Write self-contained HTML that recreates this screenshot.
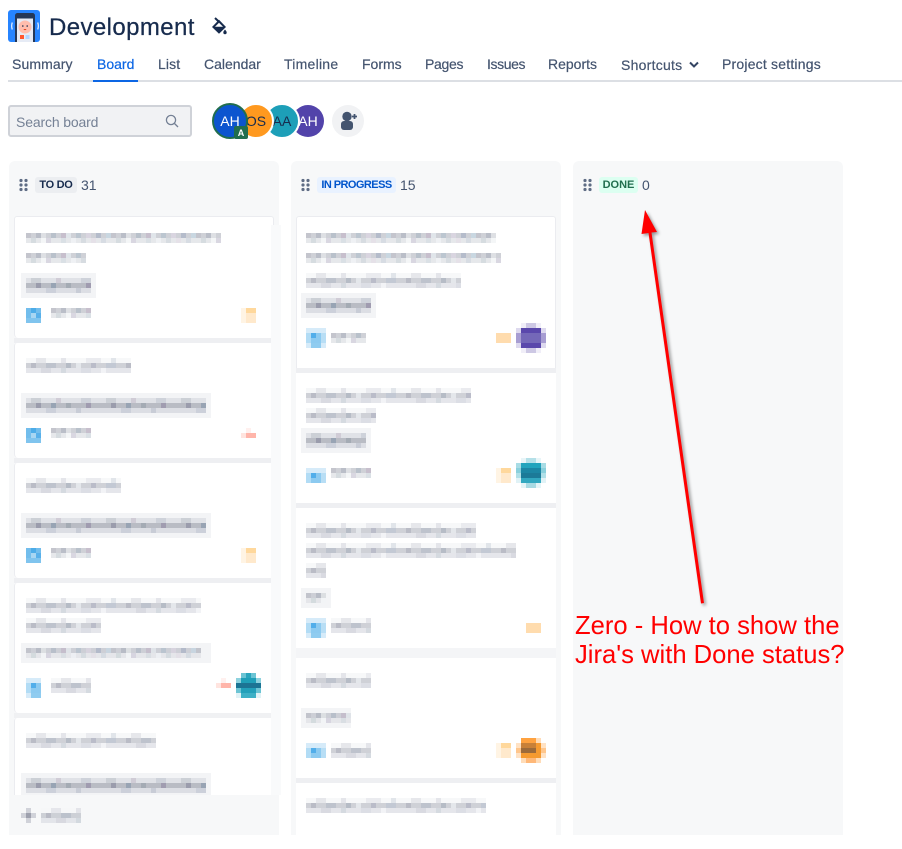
<!DOCTYPE html>
<html><head><meta charset="utf-8"><title>Development</title>
<style>
html,body{margin:0;padding:0;background:#fff;width:902px;height:849px;overflow:hidden}
body{position:relative;font-family:"Liberation Sans",sans-serif;color:#44546f}
.a{position:absolute;white-space:nowrap}
.nav{top:56px;font-size:14px;line-height:16px;color:#44546f;-webkit-text-stroke:.2px #44546f}
.col{position:absolute;top:161px;width:270px;height:674px;background:#f7f8f9;border-radius:6px 6px 0 0}
.card{position:absolute;background:#fff;box-sizing:border-box}
.band{position:absolute;background:#eeeff2}
.loz{position:absolute;top:177px;height:16px;border-radius:3px;font-size:11px;font-weight:700;line-height:16px;text-align:center}
.cnt{position:absolute;top:177px;font-size:14px;line-height:16px;color:#44546f}
.av{position:absolute;top:103px;border-radius:50%;text-align:center;box-sizing:border-box}
.m rect[fill^="url(#L"],.m rect[fill^="url(#M"]{opacity:.85}
</style></head><body>

<svg class="a" style="left:8px;top:10px" width="33" height="32" viewBox="0 0 33 32">
<rect width="32" height="32" rx="3" fill="#2684ff"/>
<path d="M7 32V5.500A2.500 2.500 0 0 1 9.500 3h15A2.500 2.500 0 0 1 27 5.500V32z" fill="#253858"/>
<rect x="9" y="8.500" width="16" height="23.500" fill="#e6ebf5"/>
<circle cx="17" cy="17" r="6.500" fill="#ffbdad"/>
<circle cx="14.800" cy="16" r=".8" fill="#172b4d"/><circle cx="19.200" cy="16" r=".8" fill="#172b4d"/>
<path d="M15.300 19h3.400l-1.700 1.200z" fill="#de350b"/>
<rect x="12" y="25" width="4" height="4" fill="#ff5630"/><rect x="17.500" y="25" width="4" height="4" fill="#b3d4ff"/>
<path d="M4.300 12.500q-1.300 3.500 0 7M29.700 12.500q1.300 3.500 0 7" stroke="#deebff" stroke-width="1.300" fill="none"/>
</svg>
<div class="a" style="left:49px;top:13px;font-size:24px;line-height:30px;color:#172b4d;-webkit-text-stroke:.25px #172b4d;letter-spacing:.4px">Development</div>
<svg class="a" style="left:210px;top:16px" width="20" height="20" viewBox="0 0 20 20">
<path d="M5 2l4.200 4" stroke="#172b4d" stroke-width="2" fill="none"/>
<path d="M9 3.800L16 11l-7 6.800L2 11z" fill="#172b4d"/>
<path d="M5 10.700L9 6.700l4 4z" fill="#fff"/>
<path d="M15 13.500c1 1.300 1.700 2 1.700 3a1.700 1.700 0 0 1-3.400 0c0-1 .7-1.700 1.700-3z" fill="#172b4d"/>
</svg>

<div class="a nav" style="left:12px;letter-spacing:.1px">Summary</div>
<div class="a nav" style="left:97px;color:#0c66e4;-webkit-text-stroke:.2px #0c66e4">Board</div>
<div class="a nav" style="left:158px;letter-spacing:.1px">List</div>
<div class="a nav" style="left:204px">Calendar</div>
<div class="a nav" style="left:284px;letter-spacing:.25px">Timeline</div>
<div class="a nav" style="left:362px">Forms</div>
<div class="a nav" style="left:425px;letter-spacing:-.3px">Pages</div>
<div class="a nav" style="left:487px;letter-spacing:-.4px">Issues</div>
<div class="a nav" style="left:548px">Reports</div>
<div class="a nav" style="left:621px;top:57px;letter-spacing:.25px">Shortcuts</div>
<svg class="a" style="left:688px;top:60px" width="12" height="10" viewBox="0 0 12 10"><path d="M2 2.500L6 6.500l4-4" fill="none" stroke="#344563" stroke-width="2"/></svg>
<div class="a nav" style="left:722px;letter-spacing:.2px">Project settings</div>
<div class="a" style="left:8px;top:80px;width:894px;height:2px;background:#dcdfe4"></div>
<div class="a" style="left:93px;top:80px;width:45px;height:2px;background:#0c66e4"></div>

<div class="a" style="left:8px;top:105px;width:184px;height:32px;box-sizing:border-box;background:#f1f2f4;border:2px solid #cfd2d8;border-radius:3px"></div>
<div class="a" style="left:16px;top:114px;font-size:14px;line-height:16px;color:#758195;letter-spacing:-.15px">Search board</div>
<svg class="a" style="left:165px;top:114px" width="14" height="14" viewBox="0 0 14 14"><circle cx="6" cy="6" r="4.600" fill="none" stroke="#758195" stroke-width="1.300"/><path d="M9.500 9.500l3.500 3.500" stroke="#758195" stroke-width="1.300"/></svg>

<div class="av" style="left:292px;width:32px;height:32px;top:105px;background:#5243aa;color:#fff;font-size:14px;line-height:32px">AH</div>
<div class="av" style="left:264px;width:36px;height:36px;background:#1d9fb8;border:2px solid #fff;color:#172b4d;font-size:14px;line-height:32px">AA</div>
<div class="av" style="left:238px;width:36px;height:36px;background:#ff991f;border:2px solid #fff;color:#172b4d;font-size:14px;line-height:32px">OS</div>
<div class="av" style="left:212px;width:36px;height:36px;background:#0c55cf;border:2px solid #216e4e;color:#fff;font-size:14px;line-height:32px">AH</div>
<div class="a" style="left:234px;top:126px;width:14px;height:13px;background:#216e4e;border-radius:2px;color:#fff;font-size:9px;font-weight:700;line-height:14px;text-align:center">A</div>
<div class="a" style="left:332px;top:105px;width:32px;height:32px;border-radius:50%;background:#f1f2f4"></div>
<svg class="a" style="left:340px;top:111px" width="18" height="20" viewBox="0 0 18 20"><circle cx="7" cy="5.500" r="4.700" fill="#44546f"/><path d="M1 13a3 3 0 0 1 3-3h6a3 3 0 0 1 3 3v3a3 3 0 0 1-3 3H4a3 3 0 0 1-3-3z" fill="#44546f"/><path d="M14.500 3v5M12 5.500h5" stroke="#44546f" stroke-width="1.800"/></svg>

<div class="col" style="left:9px"></div>
<div class="col" style="left:291px"></div>
<div class="col" style="left:573px"></div>

<!-- Column 1 cards -->
<div class="card" style="left:14px;top:216px;width:260px;height:122px;border:1px solid #ebecf0;border-bottom:0;border-radius:3px 3px 0 4px"></div>
<div class="band" style="left:14px;top:338px;width:262px;height:5px"></div>
<div class="card" style="left:14px;top:343px;width:260px;height:115px;border-left:1px solid #ebecf0;border-radius:3px 0 0 4px"></div>
<div class="band" style="left:14px;top:458px;width:262px;height:5px"></div>
<div class="card" style="left:14px;top:463px;width:260px;height:115px;border-left:1px solid #ebecf0;border-radius:3px 0 0 4px"></div>
<div class="band" style="left:14px;top:578px;width:262px;height:5px"></div>
<div class="card" style="left:14px;top:583px;width:260px;height:130px;border-left:1px solid #ebecf0;border-radius:3px 0 0 4px"></div>
<div class="band" style="left:14px;top:713px;width:262px;height:5px;background:#f0f1f3"></div>
<div class="card" style="left:14px;top:718px;width:260px;height:77px;border-left:1px solid #ebecf0;border-radius:3px 0 0 0"></div>
<div class="a" style="left:271px;top:225px;width:10px;height:570px;background:#f9fafb"></div>

<!-- Column 2 cards -->
<div class="card" style="left:296px;top:216px;width:260px;height:152px;border:1px solid #ebecf0;border-bottom:0;border-radius:3px 3px 0 0"></div>
<div class="band" style="left:296px;top:368px;width:260px;height:5px"></div>
<div class="card" style="left:296px;top:373px;width:260px;height:130px"></div>
<div class="band" style="left:296px;top:503px;width:260px;height:5px"></div>
<div class="card" style="left:296px;top:508px;width:260px;height:140px"></div>
<div class="band" style="left:296px;top:648px;width:260px;height:10px;background:#f4f5f7"></div>
<div class="card" style="left:296px;top:658px;width:260px;height:120px"></div>
<div class="band" style="left:296px;top:778px;width:260px;height:5px"></div>
<div class="card" style="left:296px;top:783px;width:260px;height:52px"></div>

<!-- mosaics -->
<svg class="a m" style="left:0;top:0" width="902" height="849" shape-rendering="crispEdges">
<defs>
<pattern id="L" width="85" height="10" patternUnits="userSpaceOnUse">
<rect width="85" height="10" fill="#e2e4e8"/>
<rect width="85" height="5" fill="#c6c9d0"/>
<rect x="0" width="5" height="5" fill="#b9bbc4"/><rect x="10" width="5" height="5" fill="#aeb2be"/><rect x="15" width="5" height="5" fill="#d8dbdf"/><rect x="25" width="5" height="5" fill="#adb6c2"/><rect x="35" width="5" height="5" fill="#bdb4c4"/><rect x="40" width="5" height="5" fill="#dbe0e6"/><rect x="50" width="5" height="5" fill="#b0bcc8"/><rect x="60" width="5" height="5" fill="#d2cdda"/><rect x="70" width="5" height="5" fill="#a8b0c2"/><rect x="80" width="5" height="5" fill="#c0d0dc"/>
<rect x="5" y="5" width="5" height="5" fill="#cfd6da"/><rect x="15" y="5" width="5" height="5" fill="#f2f4f6"/><rect x="20" y="5" width="5" height="5" fill="#d2d0dc"/><rect x="35" y="5" width="5" height="5" fill="#d4dae0"/><rect x="45" y="5" width="5" height="5" fill="#eceef2"/><rect x="55" y="5" width="5" height="5" fill="#d0d6dc"/><rect x="65" y="5" width="5" height="5" fill="#e0dce4"/><rect x="75" y="5" width="5" height="5" fill="#d0d6de"/>
</pattern>
<pattern id="M" width="95" height="15" patternUnits="userSpaceOnUse">
<rect width="95" height="5" fill="#f6f7f8"/><rect x="10" width="10" height="5" fill="#e2e3e8"/><rect x="35" width="5" height="5" fill="#dfe0e6"/><rect x="60" width="15" height="5" fill="#e6e7ec"/><rect x="85" width="5" height="5" fill="#dce0e6"/>
<rect y="5" width="95" height="5" fill="#c6c9d0"/><rect y="5" x="5" width="5" height="5" fill="#aeb0bc"/><rect y="5" x="20" width="10" height="5" fill="#b2b8c4"/><rect y="5" x="40" width="5" height="5" fill="#a9b0bc"/><rect y="5" x="50" width="5" height="5" fill="#dfe3e8"/><rect y="5" x="65" width="5" height="5" fill="#aeb0c0"/><rect y="5" x="80" width="10" height="5" fill="#b8c0cc"/>
<rect y="10" width="95" height="5" fill="#e0e2e7"/><rect y="10" x="15" width="10" height="5" fill="#d2d4dc"/><rect y="10" x="35" width="5" height="5" fill="#cdd3da"/><rect y="10" x="55" width="10" height="5" fill="#d6d8e0"/><rect y="10" x="75" width="5" height="5" fill="#f0f1f4"/>
</pattern>
<pattern id="T" width="75" height="15" patternUnits="userSpaceOnUse">
<rect width="75" height="5" fill="#e0e2e7"/><rect x="5" width="10" height="5" fill="#ccd0d6"/><rect x="30" width="5" height="5" fill="#d0ccd6"/><rect x="55" width="10" height="5" fill="#ced2da"/>
<rect y="5" width="75" height="5" fill="#b9bcc4"/><rect y="5" x="10" width="5" height="5" fill="#9a9cac"/><rect y="5" x="25" width="5" height="5" fill="#98a4b4"/><rect y="5" x="40" width="5" height="5" fill="#a4abb4"/><rect y="5" x="60" width="5" height="5" fill="#a09cb0"/>
<rect y="10" width="75" height="5" fill="#dcdee4"/><rect y="10" x="20" width="10" height="5" fill="#ccd0da"/><rect y="10" x="50" width="5" height="5" fill="#c8ccd6"/>
</pattern>
<pattern id="B" width="15" height="15" patternUnits="userSpaceOnUse">
<rect width="15" height="15" fill="#72bdec"/><rect x="5" width="5" height="5" fill="#4dace8"/><rect x="5" y="5" width="5" height="5" fill="#a8d6f2"/><rect x="10" y="5" width="5" height="5" fill="#58b0ea"/><rect y="10" width="15" height="5" fill="#80c4ee"/>
</pattern>
<pattern id="C" width="20" height="20" patternUnits="userSpaceOnUse">
<rect width="20" height="20" fill="#d6ebf9"/><rect x="5" y="5" width="10" height="10" fill="#8ccaf0"/><rect x="5" y="5" width="5" height="5" fill="#52aeea"/><rect y="5" width="5" height="10" fill="#b2dcf5"/><rect x="15" y="5" width="5" height="10" fill="#b8def5"/><rect x="5" y="15" width="10" height="5" fill="#90ccf0"/>
</pattern>
<pattern id="P" width="15" height="15" patternUnits="userSpaceOnUse">
<rect width="15" height="15" fill="#ffe9cc"/><rect x="5" width="10" height="5" fill="#ffd89c"/><rect width="5" height="15" fill="#fff4e4"/>
</pattern>
<pattern id="R" width="15" height="15" patternUnits="userSpaceOnUse">
<rect width="15" height="15" fill="#fff"/><rect x="5" width="5" height="5" fill="#fff0ee"/><rect y="5" width="5" height="5" fill="#ffe4df"/><rect x="5" y="5" width="10" height="5" fill="#ffb5aa"/>
</pattern>
<g id="teal5">
<rect x="5" width="15" height="5" fill="#6cc4d4"/><rect x="10" width="5" height="5" fill="#2aa5bd"/>
<rect y="5" width="25" height="5" fill="#1f9fb8"/><rect y="5" width="5" height="5" fill="#8ed2de"/><rect x="20" y="5" width="5" height="5" fill="#8ed2de"/>
<rect y="10" width="25" height="5" fill="#1c7494"/>
<rect y="15" width="25" height="5" fill="#22a0ba"/><rect y="15" width="5" height="5" fill="#6cc4d4"/><rect x="20" y="15" width="5" height="5" fill="#6cc4d4"/>
<rect y="20" width="25" height="5" fill="#3db0c6"/><rect y="20" width="5" height="5" fill="#e0f2f6"/><rect x="20" y="20" width="5" height="5" fill="#e0f2f6"/>
</g>
<g id="teal">
<rect x="5" width="20" height="5" fill="#e8f5f8"/><rect x="10" width="10" height="5" fill="#b5e0e8"/>
<rect y="5" width="30" height="5" fill="#a8dce5"/><rect x="5" y="5" width="20" height="5" fill="#22a4bd"/>
<rect y="10" width="30" height="5" fill="#8ad0dc"/><rect x="5" y="10" width="20" height="5" fill="#1c86a4"/>
<rect y="15" width="30" height="5" fill="#b0e0e8"/><rect x="5" y="15" width="20" height="5" fill="#1c7a98"/>
<rect y="20" width="30" height="5" fill="#e0f2f6"/><rect x="5" y="20" width="20" height="5" fill="#32a8c0"/>
<rect x="5" y="25" width="20" height="5" fill="#e4f4f7"/><rect x="10" y="25" width="10" height="5" fill="#a8dae3"/>
</g>
<g id="purple">
<rect x="5" width="20" height="5" fill="#f0eef8"/><rect x="10" width="10" height="5" fill="#cdc8e4"/>
<rect y="5" width="30" height="5" fill="#ddd9ee"/><rect x="5" y="5" width="20" height="5" fill="#5a48ac"/>
<rect y="10" width="30" height="10" fill="#a79dd2"/><rect x="5" y="10" width="20" height="10" fill="#7468b8"/>
<rect y="20" width="30" height="5" fill="#ddd9ee"/><rect x="5" y="20" width="20" height="5" fill="#5a48ac"/>
<rect x="5" y="25" width="20" height="5" fill="#f0eef8"/><rect x="10" y="25" width="10" height="5" fill="#cdc8e4"/>
</g>
<g id="orange">
<rect x="5" width="20" height="5" fill="#ffdcb8"/><rect x="5" width="15" height="5" fill="#ffa240"/>
<rect y="5" width="30" height="5" fill="#ffe2c4"/><rect x="5" y="5" width="20" height="5" fill="#c88038"/><rect x="20" y="5" width="5" height="5" fill="#f59a30"/>
<rect y="10" width="30" height="5" fill="#ffc68c"/><rect x="5" y="10" width="20" height="5" fill="#9c6a3a"/><rect x="20" y="10" width="5" height="5" fill="#f59a30"/>
<rect y="15" width="30" height="5" fill="#ffe2c4"/><rect x="5" y="15" width="20" height="5" fill="#f59a30"/>
<rect x="5" y="20" width="20" height="5" fill="#ffdcb8"/><rect x="10" y="20" width="10" height="5" fill="#ffb878"/>
</g>
</defs>

<!-- col 1 -->
<rect transform="translate(26,233)" width="195" height="10" fill="url(#L)"/>
<rect transform="translate(26,253)" width="60" height="10" fill="url(#L)"/>
<rect x="21" y="273" width="75" height="25" fill="#f3f4f6"/><rect transform="translate(26,278)" width="65" height="15" fill="url(#T)"/>
<rect transform="translate(26,308)" width="15" height="15" fill="url(#B)"/>
<rect transform="translate(51,308)" width="40" height="10" fill="url(#L)"/>
<rect transform="translate(241,308)" width="15" height="15" fill="url(#P)"/>

<rect transform="translate(26,358)" width="105" height="15" fill="url(#M)"/>
<rect x="21" y="393" width="190" height="25" fill="#f3f4f6"/><rect transform="translate(26,398)" width="180" height="15" fill="url(#T)"/>
<rect transform="translate(26,428)" width="15" height="15" fill="url(#B)"/>
<rect transform="translate(51,428)" width="40" height="10" fill="url(#L)"/>
<rect transform="translate(241,428)" width="15" height="15" fill="url(#R)"/>

<rect transform="translate(26,478)" width="95" height="15" fill="url(#M)"/>
<rect x="21" y="513" width="190" height="25" fill="#f3f4f6"/><rect transform="translate(26,518)" width="180" height="15" fill="url(#T)"/>
<rect transform="translate(26,548)" width="15" height="15" fill="url(#B)"/>
<rect transform="translate(51,548)" width="40" height="10" fill="url(#L)"/>
<rect transform="translate(241,548)" width="15" height="15" fill="url(#P)"/>

<rect transform="translate(26,598)" width="175" height="15" fill="url(#M)"/>
<rect transform="translate(26,618)" width="75" height="15" fill="url(#M)"/>
<rect x="21" y="643" width="190" height="20" fill="#f3f4f6"/><rect transform="translate(26,648)" width="175" height="10" fill="url(#L)"/>
<rect transform="translate(26,678)" width="15" height="20" fill="url(#C)"/>
<rect transform="translate(51,678)" width="40" height="15" fill="url(#M)"/>
<rect transform="translate(216,678)" width="15" height="15" fill="url(#R)"/>
<use href="#teal5" transform="translate(236,673)"/>

<rect transform="translate(26,733)" width="130" height="15" fill="url(#M)"/>
<rect x="21" y="773" width="190" height="22" fill="#f3f4f6"/><rect transform="translate(26,778)" width="180" height="15" fill="url(#T)"/>

<rect x="21" y="813" width="15" height="5" fill="#d0d2d9"/><rect x="26" y="808" width="5" height="15" fill="#d0d2d9"/><rect x="26" y="813" width="5" height="5" fill="#9ea1ae"/>
<rect transform="translate(41,808)" width="40" height="15" fill="url(#M)"/>

<!-- col 2 -->
<rect transform="translate(306,233)" width="190" height="10" fill="url(#L)"/>
<rect transform="translate(306,253)" width="195" height="10" fill="url(#L)"/>
<rect transform="translate(306,273)" width="155" height="15" fill="url(#M)"/>
<rect x="301" y="293" width="75" height="25" fill="#f3f4f6"/><rect transform="translate(306,298)" width="65" height="15" fill="url(#T)"/>
<rect transform="translate(306,328)" width="20" height="20" fill="url(#C)"/>
<rect transform="translate(331,333)" width="35" height="10" fill="url(#L)"/>
<rect x="496" y="333" width="15" height="10" fill="#ffdcae"/>
<use href="#purple" transform="translate(516,323)"/>

<rect transform="translate(306,388)" width="165" height="15" fill="url(#M)"/>
<rect transform="translate(306,408)" width="70" height="15" fill="url(#M)"/>
<rect x="301" y="428" width="70" height="25" fill="#f3f4f6"/><rect transform="translate(306,433)" width="60" height="15" fill="url(#T)"/>
<rect transform="translate(306,468)" width="20" height="15" fill="url(#C)"/>
<rect transform="translate(331,468)" width="40" height="10" fill="url(#L)"/>
<rect transform="translate(496,468)" width="15" height="15" fill="url(#P)"/>
<use href="#teal" transform="translate(516,458)"/>

<rect transform="translate(306,523)" width="170" height="15" fill="url(#M)"/>
<rect transform="translate(306,543)" width="210" height="15" fill="url(#M)"/>
<rect transform="translate(306,563)" width="20" height="15" fill="url(#M)"/>
<rect x="301" y="588" width="30" height="20" fill="#f3f4f6"/><rect transform="translate(306,593)" width="20" height="10" fill="url(#L)"/>
<rect transform="translate(306,618)" width="20" height="20" fill="url(#C)"/>
<rect transform="translate(331,618)" width="40" height="15" fill="url(#M)"/>
<rect x="526" y="623" width="15" height="10" fill="#ffdcae"/>

<rect transform="translate(306,673)" width="65" height="15" fill="url(#M)"/>
<rect x="301" y="708" width="50" height="20" fill="#f3f4f6"/><rect transform="translate(306,713)" width="45" height="10" fill="url(#L)"/>
<rect transform="translate(306,743)" width="20" height="15" fill="url(#C)"/>
<rect transform="translate(331,743)" width="40" height="15" fill="url(#M)"/>
<rect transform="translate(496,743)" width="15" height="15" fill="url(#P)"/>
<use href="#orange" transform="translate(516,738)"/>

<rect transform="translate(306,798)" width="180" height="15" fill="url(#M)"/>
</svg>

<!-- column headers -->
<svg class="a" style="left:0;top:0" width="902" height="200">
<g fill="#5e6c84">
<g id="dots"><circle cx="21" cy="180.500" r="1.600"/><circle cx="26" cy="180.500" r="1.600"/><circle cx="21" cy="185" r="1.600"/><circle cx="26" cy="185" r="1.600"/><circle cx="21" cy="189.500" r="1.600"/><circle cx="26" cy="189.500" r="1.600"/></g>
<use href="#dots" x="282"/><use href="#dots" x="564"/>
</g></svg>
<div class="loz" style="left:35px;width:42px;background:#eceef1;color:#172b4d;letter-spacing:-.3px">TO DO</div><div class="cnt" style="left:81px">31</div>
<div class="loz" style="left:317px;width:79px;background:#e9f2ff;color:#0055cc;letter-spacing:-.55px">IN PROGRESS</div><div class="cnt" style="left:400px">15</div>
<div class="loz" style="left:599px;width:39px;background:#dcfff1;color:#216e4e">DONE</div><div class="cnt" style="left:642px">0</div>

<!-- annotation -->
<svg class="a" style="left:0;top:0;filter:drop-shadow(2px 2px 1.500px rgba(0,0,0,.4))" width="902" height="849">
<path d="M645 210L657 232L651.500 232.500L704 603L701 603.500L648.500 233L641.500 234z" fill="#ff0000"/>
</svg>
<div class="a" style="left:575px;top:612px;font-size:25.600px;line-height:29px;color:#ff0000">Zero - How to show the<br>Jira's with Done status?</div>
</body></html>
